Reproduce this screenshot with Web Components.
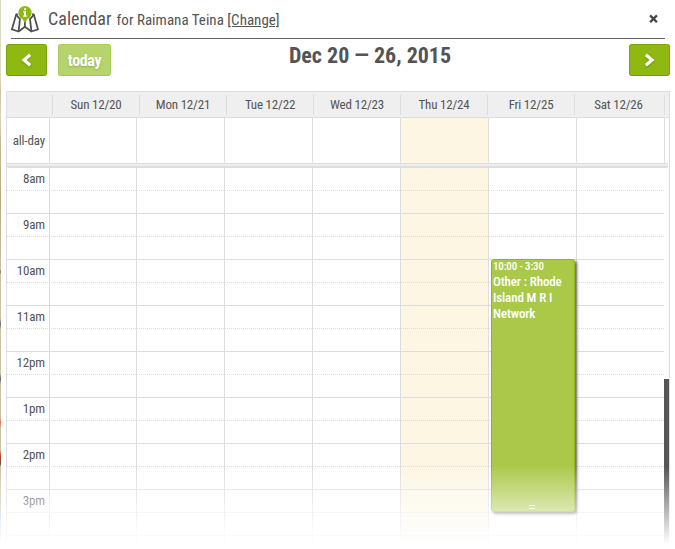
<!DOCTYPE html>
<html lang="en"><head><meta charset="utf-8"><title>Calendar</title>
<style>
html,body{margin:0;height:549px;overflow:hidden;background:#fff}
body{font-family:"Roboto Condensed",Roboto,"Liberation Sans Narrow",sans-serif;font-stretch:75%;color:#545454}
</style></head><body>
<calendar-app></calendar-app>
<script>
const define=(name,html,init)=>customElements.define(name,class extends HTMLElement{
  constructor(){super();this.attachShadow({mode:'open'}).innerHTML=html;}
  connectedCallback(){if(init)init.call(this,this.shadowRoot);}
});

define('map-icon',`<style>:host{display:block;width:28px;height:27px}svg{display:block}</style>
<svg width="28" height="27" viewBox="0 0 28 27">
<g fill="none" stroke="#505050" stroke-width="1.8" stroke-linejoin="round">
<path d="M7 8.3 5.2 8.4 .9 23.4 7.6 25.5 13.9 20.8 20.4 25.5 27 23.4 22.8 8.4 21 8.3"/>
<path d="M5.4 9 9 13.2 7.6 25M22.6 9 19 13.2 20.4 25M13.9 14V20.5"/></g>
<circle cx="14" cy="6.7" r="6.7" fill="#8fb814"/>
<path d="M13.9 16.9 10.7 12H17.1z" fill="#8fb814"/>
<g fill="#fff"><rect x="13" y="2.3" width="2" height="1.8"/><path d="M12.2 5.2H15V9.6H15.8V10.8H12.2V9.6H13V6.4H12.2z"/></g>
</svg>`);

define('panel-header',`<style>
:host{display:flex;box-sizing:border-box;margin:0 10px 0 11px;height:39px;border-bottom:1px solid #606060;align-items:flex-start}
map-icon{margin-top:6px}
.t{font-size:18px;line-height:22px;margin:8px 0 0 9px;white-space:nowrap;letter-spacing:.05px}
.s{font-size:15px;line-height:20px;margin:10px 0 0 5px;white-space:nowrap;letter-spacing:.02px}
.s span{text-decoration:underline}
svg{margin:14px 7px 0 auto}
</style><map-icon></map-icon><div class="t">Calendar</div><div class="s"><slot></slot> <span>[Change]</span></div>
<svg width="9" height="9" viewBox="0 0 9 9"><path d="M1.1 1.4 7.9 8.2M7.9 1.4 1.1 8.2" stroke="#444" stroke-width="2.3"/></svg>`);

define('tool-button',`<style>
:host{display:flex;box-sizing:border-box;width:41px;height:32px;border:1px solid #7ba506;border-bottom-color:#6f9a00;border-radius:3px;background:#8fb813;align-items:center;justify-content:center;color:#fff;font-size:16px;font-weight:700;text-shadow:0 1px 2px #6f9206}
:host([wide]){width:53px;background:#b7d36c;border-color:#abcb58 #abcb58 #a5c550;text-shadow:0 1px 2px #8fae43;letter-spacing:-.35px}
</style><slot></slot>`);

define('arrow-glyph',`<style>:host{display:block;width:11px;height:14px}:host([next]) path{transform:scaleX(-1);transform-origin:5.5px 7px}svg{display:block;filter:drop-shadow(0 1px 1px #6f9206)}</style>
<svg width="11" height="14" viewBox="0 0 11 14"><path d="M9.2 1.8 3 7 9.2 12.2" fill="none" stroke="#fff" stroke-width="3.2"/></svg>`);

define('calendar-toolbar',`<style>
:host{display:flex;padding:5px 5px 0 6px;height:48px;box-sizing:border-box;align-items:flex-start}
.today{margin-left:11px}
h2{margin:-1px 0 0;flex:1;text-align:center;font-size:22px;line-height:26px;font-weight:700}
</style><tool-button><arrow-glyph></arrow-glyph></tool-button><tool-button class="today" wide>today</tool-button>
<h2><slot></slot></h2><tool-button><arrow-glyph next></arrow-glyph></tool-button>`);

define('day-header',`<style>
:host{display:grid;grid-template-columns:45px repeat(6,87px) 90px 1fr;height:25px;background:#efefef;border-bottom:1px solid #ddd;font-size:13px}
div{margin:3px 0;border-left:1px solid #ddd;text-align:center;line-height:20px;letter-spacing:-.2px}
.c{border:0}.sat{padding-right:2px;border-right:1px solid #ddd;margin-right:-1px}
</style><div class="c"></div>`,function(r){
 ['Sun 12/20','Mon 12/21','Tue 12/22','Wed 12/23','Thu 12/24','Fri 12/25','Sat 12/26'].forEach((d,i)=>{
  const e=document.createElement('div');e.textContent=d;if(i==6)e.className='sat';r.append(e);});
});

define('time-row',`<style>
:host{display:grid;grid-template-columns:42px 87px repeat(5,88px) 88px;width:657px;height:46px;box-sizing:border-box;border-bottom:1px solid #ddd;font-size:13px;letter-spacing:-.15px}
:host([allday]){grid-template-columns:42px 87px repeat(5,88px) 89px;border:0;width:658px;height:45px}
.l{text-align:right;padding-right:4px;box-sizing:border-box;line-height:21px}
:host([allday]) .l{line-height:45px}
.d{border-left:1px solid #ddd}.hot{background:#fcf6e3}
:host([allday]) .d:last-child{border-right:1px solid #ddd}
:host(:not([allday])){background:repeating-linear-gradient(90deg,#ddd 0 1px,transparent 1px 2px) 0 22px/100% 1px no-repeat}
:host(:not([allday])) .hot{background:repeating-linear-gradient(90deg,#ddd 0 1px,transparent 1px 2px) 0 22px/100% 1px no-repeat,#fcf6e3}
</style><div class="l"><slot></slot></div><div class="d"></div><div class="d"></div><div class="d"></div><div class="d"></div><div class="d hot"></div><div class="d"></div><div class="d"></div>`);

define('calendar-event',`<style>
:host{display:block;box-sizing:border-box;width:84px;height:253px;background:#abc949;border:1px solid #8fb813;border-radius:3px;box-shadow:2px 2px 3px #666;color:#fff;font-weight:500;padding:0 1px}
.t{font-size:11px;line-height:14px;letter-spacing:-.15px}.n{font-size:13px;line-height:16px;width:76px;letter-spacing:-.12px}
.g{position:absolute;bottom:2px;left:37px;width:6px;height:4px;box-sizing:border-box;border-top:1px solid #fff;border-bottom:1px solid #fff}
</style><div class="t"><slot name="time"></slot></div><div class="n"><slot></slot></div><div class="g"></div>`);

define('week-grid',`<style>
:host{display:block;box-sizing:border-box;width:664px;height:458px;margin:4px 0 0 6px;border:1px solid #ddd;border-bottom:0;position:relative;overflow:hidden}
.band{height:2px;border-top:1px solid #ddd;border-bottom:2px solid #ddd;background:#eee;width:661px;border-radius:0 0 2px 2px}
calendar-event{position:absolute;left:484px;top:167px}
.bar{position:absolute;right:0;top:287px;width:5px;bottom:0;background:#555}
</style><day-header></day-header><time-row allday>all-day</time-row><div class="band"></div><div class="rows"></div>
<calendar-event><span slot="time">10:00 - 3:30</span>Other : Rhode Island M R I Network</calendar-event><div class="bar"></div>`,function(r){
 for(const h of ['8am','9am','10am','11am','12pm','1pm','2pm','3pm','4pm']){
  const e=document.createElement('time-row');e.textContent=h;r.querySelector('.rows').append(e);}
});

define('calendar-app',`<style>
:host{display:block;width:675px;height:549px;overflow:hidden;position:relative}
.edge{position:absolute;left:0;top:0;width:1px;height:549px;background:linear-gradient(#ddd9c3 0 14%,#c9c19c 17%,#d9d4b9 21%,#c5bc94 26%,#b5aa7c 36%,#c9c2a4 49%,#85807a 49.5%,#c9c2a4 50% 58%,#77736c 59%,#c9c2a4 60% 68%,#66635f 69%,#c9c2a4 70% 76%,#ef6b51 77%,#c9c2a4 78% 82%,#c64520 83%,#5c5148 84.5%,#c9c2a4 85% 93%,#9bd4ef 94%)}
.fade{position:absolute;inset:466px 0 0 0;background:linear-gradient(#fff0,#fff 78px)}
</style><div class="edge"></div><panel-header>for Raimana Teina</panel-header>
<calendar-toolbar>Dec 20 — 26, 2015</calendar-toolbar><week-grid></week-grid><div class="fade"></div>`);
</script></body></html>
